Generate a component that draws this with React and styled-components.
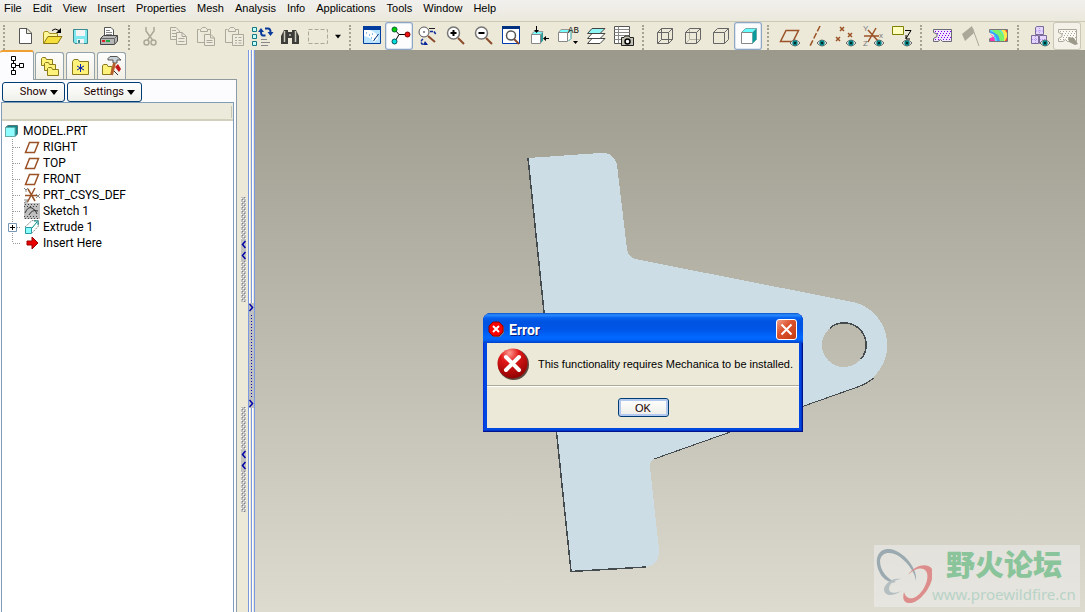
import React from "react";
import styled, { createGlobalStyle, css } from "styled-components";

const beige = "#ece9d8";
const uiFont = `"Liberation Sans", Arial, sans-serif`;
const treeFont = `Roboto, "Liberation Sans", sans-serif`;

const GlobalStyle = createGlobalStyle`
* { box-sizing: border-box; }
body {
  margin: 0;
  background: ${beige};
  font: 11px/16px ${uiFont};
  color: #000;
}
button { font: inherit; color: inherit; }
`;

const StyledApp = styled.div`
display: flex;
flex-direction: column;
min-height: 100vh;
overflow: hidden;
`;

const StyledMenuBar = styled.nav`
display: flex;
gap: 11px;
height: 22px;
padding: 0 4px;
background: linear-gradient(#f1f0ee, #ebe9dc);
border-bottom: 1px solid #cbc8b8;
`;

const StyledMenuItem = styled.button`
height: 16px;
padding: 0;
border: 0;
background: none;
white-space: nowrap;
`;

const StyledToolbar = styled.div`
display: flex;
align-items: stretch;
height: 28px;
background: ${beige};
`;

const StyledHandle = styled.span`
flex: none;
width: 3px;
margin: 3px 5px 0;
border-left: 2px dotted #a5a293;
&:first-child { margin-left: 3px; }
`;

const StyledTool = styled.button`
flex: none;
width: 28px;
height: 28px;
padding: 0;
border: 0;
background: none;
svg { display: block; }
${props => props.$active && css`
  border-radius: 3px;
  background: #fdfdfe;
  box-shadow: inset 0 0 0 1px #8ea6c4, inset 0 0 0 2px #dde5ee;
`}
${props => props.$dim && css`
  border-radius: 3px;
  background: #f3f1e8;
  box-shadow: inset 0 0 0 1px #cac7b8;
`}
`;

const StyledDropArrow = styled.button`
display: grid;
place-items: center;
flex: none;
width: 12px;
padding: 0;
border: 0;
background: none;
`;

const StyledMain = styled.div`
display: flex;
flex: 1;
`;

const StyledSide = styled.aside`
display: flex;
flex-direction: column;
flex: none;
width: 237px;
`;

const StyledTabs = styled.div`
display: flex;
align-items: flex-end;
gap: 2px;
height: 29px;
`;

const StyledTab = styled.button`
width: 29px;
height: 27px;
padding: 0;
border: 1px solid #93a2ab;
border-bottom: 0;
border-radius: 3px 3px 0 0;
background: linear-gradient(#fdfdfc, #f1efe5);
svg { display: block; margin: auto; }
${props => props.$active && css`
  position: relative;
  z-index: 1;
  width: 34px;
  height: 30px;
  margin: 0 -1px -1px 0;
  border-left: 0;
  border-top: 2px solid #f0a030;
  background: #fcfcfe;
`}
`;

const StyledPanel = styled.div`
display: flex;
flex-direction: column;
flex: 1;
padding: 2px 1px 0;
border-top: 1px solid #919b9c;
border-right: 1px solid #8c9baa;
background: #fcfcfe;
`;

const StyledPanelButtons = styled.div`
display: flex;
gap: 2px;
padding: 0 1px;
`;

const StyledPanelButton = styled.button`
display: flex;
align-items: center;
justify-content: flex-end;
gap: 3px;
width: ${props => props.$wide ? 75 : 63}px;
height: 20px;
padding: 0 6px 0 0;
border: 1px solid #003c74;
border-radius: 3px;
background: linear-gradient(#fff, #f0f0ea);
color: #200;
font-family: ${treeFont};
`;

const StyledTreeBox = styled.div`
flex: 1;
margin-right: 1px;
border: 1px solid #7f9db9;
border-bottom: 0;
background: #fff;
`;

const StyledTreeHeader = styled.div`
height: 18px;
padding: 3px 1px 0 0;
border-bottom: 2px solid #d2cfbd;
background: #ebeadb;
&::after {
  content: "";
  display: block;
  height: 12px;
  border-right: 1px solid #c7c5b2;
}
`;

const StyledTree = styled.ul`
margin: 0;
padding: 2px 0 0 3px;
list-style: none;
font: 12px/16px ${treeFont};
ul {
  padding: 0;
}
`;

const StyledNode = styled.div`
display: flex;
align-items: center;
height: 16px;
gap: ${props => props.$root ? 5 : 3}px;
white-space: nowrap;
svg { flex: none; }
`;

const StyledGrips = styled.div`
display: flex;
flex-direction: column;
align-items: flex-end;
gap: 105px;
flex: none;
width: 11px;
padding: 147px 2px 0 0;
`;

const StyledSash = styled.div`
flex: none;
width: 7px;
padding-top: 253px;
border-left: 1px solid #7b99e0;
border-right: 1px solid #7b99e0;
background: linear-gradient(90deg, #fff 1px, ${beige} 1px 2px, #7b99e0 2px 3px, #fff 3px 4px, ${beige} 4px);
svg { display: block; }
`;

const StyledViewport = styled.main`
position: relative;
flex: 1;
min-width: 0;
background: linear-gradient(#9b988c, #dddbcf);
`;

const StyledModel = styled.svg`
position: absolute;
inset: 0;
width: 100%;
height: 100%;
`;

const StyledDialog = styled.section`
position: absolute;
left: 228px;
top: 263px;
width: 320px;
padding: 0 4px 4px;
border-radius: 8px 8px 0 0;
background: #0046e0;
box-shadow: inset -1px -1px #00138c, inset 1px 0 #0831d9, inset -2px -2px #0036c8;
`;

const StyledTitleBar = styled.header`
display: flex;
align-items: center;
gap: 4px;
height: 30px;
margin: 0 -4px;
padding: 2px 6px 0 5px;
border-radius: 8px 8px 0 0;
background: linear-gradient(#0a52c8, #2a8cff 2px, #0560ee 5px, #0053e1 9px, #0056e8 17px, #0068ff 24px, #0062f8 27px, #0040c8);
h1 {
  flex: 1;
  margin: 0;
  padding-top: 2px;
  color: #fff;
  font: bold 14px/16px ${treeFont};
  text-shadow: 1px 1px #0a1f80;
}
`;

const StyledClose = styled.button`
display: grid;
place-items: center;
width: 21px;
height: 21px;
padding: 0;
border: 1px solid #fff;
border-radius: 3px;
background: linear-gradient(135deg, #f0a088, #dd5530 40%, #c33a10);
`;

const StyledMessage = styled.div`
display: flex;
align-items: center;
gap: 9px;
height: 43px;
padding: 0 10px;
border-bottom: 1px solid #aca899;
background: ${beige};
white-space: nowrap;
p { margin: 0; }
svg { flex: none; }
`;

const StyledFooter = styled.div`
display: flex;
justify-content: center;
padding: 11px 0;
border-top: 1px solid #fff;
background: ${beige};
`;

const StyledOk = styled.button`
width: 51px;
height: 19px;
padding: 0;
border: 1px solid #003c74;
border-radius: 3px;
background: linear-gradient(#fff, #eeede6);
box-shadow: inset 0 0 0 2px #b3c9f0;
color: #200;
line-height: 16px;
`;

const StyledWatermark = styled.div`
position: absolute;
right: 5px;
bottom: 5px;
display: flex;
width: 206px;
height: 62px;
background: rgba(240, 240, 240, 0.5);
svg { flex: none; }
`;

const StyledForum = styled.div`
display: flex;
flex-direction: column;
align-items: center;
margin-top: -3px;
white-space: nowrap;
strong {
  color: #8ac49a;
  font: 900 29px/42px "Noto Sans CJK SC", sans-serif;
}
span {
  color: #b8d3c7;
  font: 15px/20px "Noto Sans", sans-serif;
}
`;

function Eye({ x = 20, y = 21 }) {
  return (
    <g>
      <path d={`M${x - 5} ${y}q5 -6 10 0q-5 6 -10 0`} fill="#eee" stroke="#666" />
      <circle cx={x} cy={y} r="2.7" fill="#008080" />
      <rect x={x - 1} y={y - 1} width="2" height="2" fill="#002828" />
    </g>
  );
}

function Lens({ sign }) {
  return (
    <g>
      <path d="M17 16l6 6" stroke="#8b4a2b" strokeWidth="2" />
      <circle cx="12.5" cy="11" r="6" fill="#fff" stroke="#777" strokeWidth="1.5" />
      <path d={sign} stroke="#000" strokeWidth="2" fill="none" />
    </g>
  );
}

function MeshRegion({ fill, dots, edge }) {
  return (
    <g>
      <path d="M5.500 7.500H23.500V19.500H14.500L12.500 17.500L10 19.500H5.500V16.500L9 14.500V12L5.500 10.500z" fill={fill} stroke={edge} />
      <path d="M7 9.500h16M9 11.500h14M11 13.500h12M10 15.500h13M7 17.500h4M15 17.500h8" stroke={dots} strokeDasharray="1 2" />
    </g>
  );
}

const clipboard = (
  <path d="M7.500 7.500H5.500V20.500H12M15 7.500H18.500V12M8.500 9.500V7.500L10.500 5.500H13.500L15.500 7.500V9.500z" />
);

const icons = {
  New: <path d="M8.500 6.500H16L20.500 11V21.500H8.500zM15.500 6.500V11.500H20.500" fill="#fff" stroke="#555" />,
  Open: (
    <g>
      <path d="M4.500 21V10.500L6 9.500H9L10.500 11.500H18.500V14" fill="#fff79a" stroke="#a58f20" />
      <path d="M4.500 21.500L9 14.500H23L18.500 21.500z" fill="#f5df3d" stroke="#8a7714" />
      <path d="M13 8.500q3 -3 7 0" fill="none" stroke="#000" />
      <path d="M17 11h5V6z" fill="#000" />
    </g>
  ),
  Save: (
    <g>
      <path d="M6.500 7.500H20.500V21.500H8L6.500 20z" fill="#7ee8ee" stroke="#3a8a90" />
      <path d="M9 8h9v6H9zM10 17h7v4.500h-7z" fill="#f4f4f4" />
      <path d="M11 18h2v3h-2z" fill="#3a8a90" />
    </g>
  ),
  Print: (
    <g>
      <path d="M9.500 13V5.500H16L18.500 8V13" fill="#fff" stroke="#555" />
      <path d="M11 8.500h4M11 10.500h6M11 12.500h6" stroke="#888" />
      <path d="M5.500 16.500L8.500 13.500H22.500V19L19.500 22.500H5.500z" fill="#b5b5b5" stroke="#444" />
      <path d="M6 16.500H19.500V22M19.500 16.500L22 14" fill="none" stroke="#666" />
      <path d="M7 18h3v2H7z" fill="#d22" />
      <path d="M11 18h4v2h-4z" fill="#2a4" />
    </g>
  ),
  Cut: (
    <g fill="none" stroke="#aca899" strokeWidth="1.500">
      <path d="M10 5V9L16.500 18M18 5V9L11.500 18" />
      <circle cx="10.500" cy="20.500" r="2.500" />
      <circle cx="17.500" cy="20.500" r="2.500" />
    </g>
  ),
  Copy: (
    <g fill="#eeecdf" stroke="#aca899">
      <path d="M6.500 5.500H12L15.500 9V17.500H6.500zM8 8.500h4M8 11.500h6M8 14.500h6" />
      <path d="M12.500 10.500H18L22.500 14.500V22.500H12.500zM18 10.500V14.500H22M14.500 16.500h6M14.500 19.500h6" />
    </g>
  ),
  Paste: (
    <g fill="#eeecdf" stroke="#aca899">
      {clipboard}
      <path d="M12.500 12.500H19L22.500 16V23.500H12.500zM18.500 12.500V16H22M14.500 18.500h6M14.500 20.500h6" />
    </g>
  ),
  "Paste Special": (
    <g fill="#eeecdf" stroke="#aca899">
      {clipboard}
      <path d="M12.500 12.500H23.500V23.500H12.500zM15 15.500h2M18.500 15.500h3M15 18.500h2M18.500 18.500h3M15 21h2M18.500 21h3" />
    </g>
  ),
  Regenerate: (
    <g fill="none">
      <path d="M4.500 5.500h4v4h-4zM4.500 12.500h4v4h-4zM4.500 19.500h4v4h-4z" fill="#c5ffff" stroke="#157a80" />
      <path d="M13 17.500h6M13 20.500h9M13 23.500h7" stroke="#888" />
      <path d="M17.500 13.500H15q-2 0 -2 -4M17 6.500h3q2.500 0 2.500 4" stroke="#0a3a9c" strokeWidth="2" />
      <path d="M10 10h6l-3 -4zM19.500 10h6l-3 4z" fill="#0a3a9c" />
    </g>
  ),
  Find: (
    <g>
      <path d="M5 21V14L8 8H12V22H5zM16 22V8H20L23 14V22zM12 10h4v6h-4z" fill="#3c3c38" />
      <path d="M8.500 9V20M19.500 9V20" stroke="#c9c9bd" strokeWidth="1.500" />
      <path d="M13 12h2v2h-2z" fill="#999" />
    </g>
  ),
  Select: <path d="M4.500 7.500H23.500V21.500H4.500z" fill="none" stroke="#aca899" strokeDasharray="4 2" />,
  Repaint: (
    <g>
      <path d="M6.500 4.500H23.500V21.500H6.500z" fill="#b8e4ff" stroke="#003c9e" />
      <path d="M6 4h18v4H6z" fill="#003c9e" />
      <path d="M7 8h6q8 3 8 9l-4 3q-4 -5 -10 -6z" fill="#fff" />
      <path d="M9 11h1M12 13h1M15 12h1M14 16h1M17 17h1" stroke="#1b7fd8" />
      <path d="M21.500 12l-5 7" stroke="#003080" />
    </g>
  ),
  "Spin Center": (
    <g>
      <path d="M10 8l4 4.500h8M14 12.500l-4 7" fill="none" stroke="#000" />
      <circle cx="9.500" cy="7.500" r="2.500" fill="#0c0" stroke="#063" />
      <circle cx="22.500" cy="12.500" r="2.500" fill="#f01010" stroke="#700" />
      <circle cx="9.500" cy="19.500" r="2.500" fill="#0dd" stroke="#055" />
    </g>
  ),
  Orient: (
    <g fill="none">
      <path d="M15 14l7 6" stroke="#8b4a2b" strokeWidth="2" />
      <circle cx="11" cy="10" r="5" fill="#fff" stroke="#555" />
      <path d="M11 9v2M16 6.500h6" stroke="#222" />
      <path d="M17 9.500h4l2 3M10 17q-3 2 -1 5h5" stroke="#0a2a9c" strokeWidth="1.500" strokeDasharray="3 1" />
      <path d="M12 19l3 4h-5z" fill="#0a2a9c" />
    </g>
  ),
  "Zoom In": <Lens sign="M9.500 11h6M12.500 8v6" />,
  "Zoom Out": <Lens sign="M9.500 11h6" />,
  Refit: (
    <g>
      <path d="M5.500 4.500H22.500V21.500H5.500z" fill="#fff" stroke="#003cae" />
      <path d="M5 4h18v3H5z" fill="#003080" />
      <path d="M17 17l5 5" stroke="#8b4a2b" strokeWidth="2" />
      <circle cx="14" cy="13.500" r="4.500" fill="#fff" stroke="#555" strokeWidth="1.500" />
    </g>
  ),
  Reorient: (
    <g>
      <path d="M6.500 12.500L9 9.500H18L15.500 12.500z" fill="#7ff" stroke="#999" />
      <path d="M6.500 12.500H15.500V21.500H6.500z" fill="#fff" stroke="#888" />
      <path d="M16 12.500L18 10V18.500L16 21z" fill="#2a9c9c" />
      <path d="M11.500 4v5M24 16.500h-5" stroke="#000" />
      <path d="M9 8h5l-2.500 3zM21 14v5l-3 -2.500z" fill="#000" />
    </g>
  ),
  "Saved Views": (
    <g>
      <path d="M5.500 10.500L8 7.500H17L14.500 10.500z" fill="#7ff" stroke="#999" />
      <path d="M5.500 10.500H14.500V19.500H5.500z" fill="#fff" stroke="#888" />
      <path d="M15.500 10.500L18 8V16.500L15.500 19" fill="#fff" stroke="#2a9c9c" />
      <text x="15" y="11" fontSize="9" fontFamily="Liberation Mono, monospace" fill="#111">AB</text>
      <path d="M20 19h5l-2.500 3z" fill="#000" />
    </g>
  ),
  Layers: (
    <g stroke="#444">
      <path d="M6.500 21.500L11 16.500H24L19 21.500z" fill="#fff" />
      <path d="M6.500 16.500L11 11.500H24L19 16.500z" fill="#fff" />
      <path d="M6.500 11.500L11 6.500H24L19 11.500z" fill="#8ff6f6" />
    </g>
  ),
  "View Manager": (
    <g>
      <path d="M5.500 4.500H20.500V21.500H5.500z" fill="#fff" stroke="#555" />
      <path d="M5.500 7.500h15M5.500 10.500h15M5.500 13.500h15M5.500 17.500h15M9.500 4.500v17" stroke="#888" />
      <path d="M12.500 15.500H15L16 14H20L21 15.500H24.500V23.500H12.500z" fill="#c4c2b5" stroke="#222" />
      <circle cx="18.500" cy="19.500" r="2.500" fill="#fff" stroke="#000" strokeWidth="1.500" />
    </g>
  ),
  Wireframe: <path d="M7.500 10.500H18.500V21.500H7.500zM11.500 6.500H22.500V17.500H11.500zM7.500 10.500l4 -4M18.500 10.500l4 -4M18.500 21.500l4 -4M7.500 21.500l4 -4" fill="none" stroke="#666" />,
  "Hidden Line": (
    <g fill="none">
      <path d="M11.500 7V17.500H22M11.500 17.500l-4 4" stroke="#b5b2a4" />
      <path d="M7.500 10.500H18.500V21.500H7.500zM7.500 10.500l4 -4H22.500V17.500l-4 4M18.500 10.500l4 -4" stroke="#666" />
    </g>
  ),
  "No Hidden": <path d="M7.500 10.500H18.500V21.500H7.500zM7.500 10.500l4 -4H22.500V17.500l-4 4M18.500 10.500l4 -4" fill="none" stroke="#666" />,
  Shading: (
    <g>
      <path d="M7.500 10.500l4 -4H22.500l-4 4z" fill="#6ff" stroke="#7aa" />
      <path d="M7.500 10.500H18.500V21.500H7.500z" fill="#fff" stroke="#888" />
      <path d="M18.500 10.500l4 -4V17.500l-4 4z" fill="#0a9c9c" stroke="#6aa" />
    </g>
  ),
  "Datum Planes": <g><path d="M5.500 19.500L11 8.500H23.500L18 19.500z" fill="none" stroke="#9a5226" strokeWidth="1.500" /><Eye /></g>,
  "Datum Axes": <g><path d="M17 4L7 24" stroke="#9a5226" strokeWidth="1.500" strokeDasharray="6 2" /><Eye x={19} /></g>,
  "Datum Points": (
    <g>
      <path d="M9 5l4 4M13 5l-4 4M17 11l4 4M21 11l-4 4M5 15l4 4M9 15l-4 4" stroke="#9a5226" strokeWidth="1.500" />
      <Eye />
    </g>
  ),
  "Coordinate Systems": (
    <g>
      <path d="M5 14h15M9 20L17 6M9 8l10 11" stroke="#9a5226" strokeWidth="1.500" />
      <g fontSize="8" fontFamily="Liberation Sans, sans-serif" fill="#777">
        <text x="4" y="9">Y</text>
        <text x="20" y="16">x</text>
        <text x="4" y="24">Z</text>
      </g>
      <Eye />
    </g>
  ),
  Annotations: (
    <g>
      <path d="M5.500 4.500H16.500V12.500H5.500z" fill="#ffffc0" stroke="#808000" />
      <path d="M18 8.500h6l-5 8M19 13v4h4" fill="none" stroke="#000" />
      <Eye />
    </g>
  ),
  "Mesh Region": <MeshRegion fill="#f3e6ff" dots="#7a00f0" edge="#6a6a76" />,
  Flag: <g><path d="M6 12L16 4L18 11L9 19z" fill="#aca899" /><path d="M16.500 6L23 24" stroke="#aca899" /></g>,
  Results: (
    <g>
      <path d="M5.500 7.500H23.500V19.500H12L10 17V12L5.500 10.500z" fill="#4fe0ff" />
      <path d="M8 8h7q6 4 5 11h-5q0 -6 -4 -7z" fill="#7cf36a" />
      <path d="M17 8h6v11h-3q1 -7 -3 -11z" fill="#ffe94a" />
      <path d="M6 11q6 1 7 8h3q-1 -8 -10 -10z" fill="#3aa0ff" />
      <path d="M6 12q5 2 5 7H6v-3l3 -1z" fill="#f038b8" />
      <path d="M21 8h2v3zM21 19l2 -4v4z" fill="#f04040" />
      <path d="M5.500 10.500V7.500H23.500V19.500H5.500V16.500" fill="none" stroke="#777" />
    </g>
  ),
  Simulation: (
    <g>
      <path d="M10.500 5.500L12 4.500H18.500V12.500H10.500zM6.500 13.500H13.500V21.500H6.500zM14.500 13.500H21.500V21.500H14.500z" fill="#e4d6ff" stroke="#7a6a9c" />
      <path d="M11 9h7M14.500 6v6M7 17.500h6M10.500 14v7M15 17.500h6" stroke="#b79af0" strokeDasharray="1 1" />
      <Eye />
    </g>
  ),
  "Mesh Control": (
    <g>
      <MeshRegion fill="#faf9f4" dots="#aca899" edge="#aca899" />
      <path d="M15 15l6 1l4 6l-3 1l-6 -3z" fill="#9c998b" />
    </g>
  ),
};

const menus = ["File", "Edit", "View", "Insert", "Properties", "Mesh", "Analysis", "Info", "Applications", "Tools", "Window", "Help"];

const groups = [
  ["New", "Open", "Save", "Print"],
  ["Cut", "Copy", "Paste", "Paste Special", "Regenerate", "Find", "Select"],
  ["Repaint", "Spin Center", "Orient", "Zoom In", "Zoom Out", "Refit", "Reorient", "Saved Views", "Layers", "View Manager"],
  ["Wireframe", "Hidden Line", "No Hidden", "Shading"],
  ["Datum Planes", "Datum Axes", "Datum Points", "Coordinate Systems", "Annotations"],
  ["Mesh Region", "Flag", "Results"],
  ["Simulation", "Mesh Control"],
];

const active = ["Spin Center", "Shading"];

function Caret({ width = 8 }) {
  return (
    <svg width={width} height="5" viewBox="0 0 8 5" aria-hidden="true">
      <path d="M0 0h8L4 5z" />
    </svg>
  );
}

function Toolbar() {
  return (
    <StyledToolbar role="toolbar">
      {groups.map((group, i) => (
        <React.Fragment key={i}>
          <StyledHandle />
          {group.map(name => (
            <StyledTool key={name} aria-label={name} $active={active.includes(name)} $dim={name === "Mesh Control"}>
              <svg width="28" height="28" viewBox="0 0 28 28">{icons[name]}</svg>
            </StyledTool>
          ))}
          {i === 1 && <StyledDropArrow aria-label="Selection options"><Caret width={6} /></StyledDropArrow>}
        </React.Fragment>
      ))}
    </StyledToolbar>
  );
}

function folder(x, y) {
  return <path d={`M${x} ${y + 8}v-7l1 -1h3l1 2h6v6z`} fill="#fff27a" stroke="#8a7a1e" />;
}

const tabs = [
  ["Model Tree", <path d="M6.500 2.500h4v4h-4zM6.500 9.500h4v4h-4zM14.500 9.500h4v4h-4zM6.500 16.500h4v4h-4zM8.500 6.500v3M8.500 13.500v3M10.500 11.500h4" fill="#fff" stroke="#000" />],
  ["Folder Browser", <g>{folder(3.5, 3.5)}{folder(6.5, 8.5)}{folder(9.5, 13.5)}</g>],
  ["Favorites", (
    <g>
      <path d="M3.500 20.500V7.500L5 5.500H9L10.500 7.500H19.500V20.500z" fill="#fff27a" stroke="#8a7a1e" />
      <path d="M11.500 10v8M8 12l7 4M15 12l-7 4" stroke="#0020b0" />
    </g>
  )],
  ["Connections", (
    <g>
      <path d="M2.500 20.500V11.500L4 10.500H7L8 12.500H12V20.500z" fill="#fff27a" stroke="#8a7a1e" />
      <path d="M8 4.500L10 2.500H17L21 6H17V9H13V6H8z" fill="#c9d2d6" stroke="#555" />
      <path d="M14.500 9L11.500 21" stroke="#b5602a" strokeWidth="3" />
      <path d="M18 10l3 5l-2 3l-4 -5z" fill="#c01818" />
      <path d="M14 17l4 4" stroke="#333" />
    </g>
  )],
];

const plane = <path d="M1.500 13.500L5.500 3.500H14.500L10.500 13.500z" fill="none" stroke="#9a5226" strokeWidth="1.500" />;

const nodes = [
  ["RIGHT", plane],
  ["TOP", plane],
  ["FRONT", plane],
  ["PRT_CSYS_DEF", <g><path d="M1 8.500h12M3.500 15L11 1M4 2l7 12" stroke="#9a5226" strokeWidth="1.500" /><path d="M0 1l2 2l2 -2M2 3v2M12 7l4 4M16 7l-4 4M0 13h4l-4 3h4" fill="none" stroke="#888" /></g>],
  ["Sketch 1", (
    <g>
      <path d="M0 0h16v16H0z" fill="#bfbfbf" />
      <path d="M1 1.500h15M0 3.500h15M0 13.500h15M1 15.500h15" stroke="#444" strokeDasharray="1 2" />
      <path d="M1 10q3 -7 7 -5t5 6M5 12q3 -6 9 -4" fill="none" stroke="#333" />
    </g>
  )],
  ["Extrude 1", (
    <g>
      <path d="M1.500 8.500h6v6h-6z" fill="#8ff" stroke="#2a9aa0" />
      <path d="M1 8L8 1.500H14.500V7L8 14" fill="none" stroke="#888" strokeDasharray="2 1" />
      <path d="M8 9l5 -6M10 2h4v4" fill="none" stroke="#088" />
    </g>
  ), true],
  ["Insert Here", <path d="M3 6h5V2l6 6l-6 6v-4H3z" fill="#e80000" stroke="#900" strokeWidth="1" />],
];

function Branch({ expandable, last }) {
  return (
    <svg width="16" height="16" aria-hidden="true">
      <path d={last ? "M7.500 0v8M8 8.500h8" : "M7.500 0v16M8 8.500h8"} fill="none" stroke="#999" strokeDasharray="1 1" />
      {expandable && <path d="M3.500 4.500h8v8h-8z" fill="#fff" stroke="#7898b5" />}
      {expandable && <path d="M5 8.500h5M7.500 6v5" stroke="#000" />}
    </svg>
  );
}

function Side() {
  return (
    <StyledSide>
      <StyledTabs role="tablist">
        {tabs.map(([name, art], i) => (
          <StyledTab key={name} role="tab" aria-label={name} aria-selected={i === 0} $active={i === 0}>
            <svg width="24" height="24" viewBox="0 0 24 24">{art}</svg>
          </StyledTab>
        ))}
      </StyledTabs>
      <StyledPanel>
        <StyledPanelButtons>
          <StyledPanelButton>Show<Caret /></StyledPanelButton>
          <StyledPanelButton $wide>Settings<Caret /></StyledPanelButton>
        </StyledPanelButtons>
        <StyledTreeBox>
          <StyledTreeHeader />
          <StyledTree>
            <li>
              <StyledNode $root>
                <svg width="13" height="14">
                  <path d="M0.500 3.500L3 1.500H12.500V10L10 12.500H0.500z" fill="#0a8a8a" stroke="#577" />
                  <path d="M0.500 3.500h9.500v9h-9.500z" fill="#8ffcff" stroke="#6aa" />
                </svg>
                MODEL.PRT
              </StyledNode>
              <StyledTree>
                {nodes.map(([name, art, expandable], i) => (
                  <li key={name}>
                    <StyledNode>
                      <Branch expandable={expandable} last={i === nodes.length - 1} />
                      <svg width="16" height="16" viewBox="0 0 16 16">{art}</svg>
                      {name}
                    </StyledNode>
                  </li>
                ))}
              </StyledTree>
            </li>
          </StyledTree>
        </StyledTreeBox>
      </StyledPanel>
    </StyledSide>
  );
}

function Grip({ id }) {
  return (
    <svg width="5" height="105">
      <pattern id={id} width="4" height="4" patternUnits="userSpaceOnUse">
        <path d="M0 0h4v4H0z" fill="#c0c0c0" />
        <path d="M0 1h1v1H0zM2 3h1v1H2z" fill="#fff" />
        <path d="M1 2h1v1H1zM3 0h1v1H3z" fill="#808080" />
      </pattern>
      <path d="M0 0h5v105H0z" fill={`url(#${id})`} />
      <path d="M0 42h5v22H0z" fill="#c0c0c0" />
      <path d="M4.500 44l-3 3.500l3 3.500M4.500 55l-3 3.500l3 3.500" fill="none" stroke="#0000a8" strokeWidth="1.500" />
    </svg>
  );
}

function Model() {
  return (
    <StyledModel viewBox="255 50 830 562" preserveAspectRatio="xMinYMin slice" shapeRendering="crispEdges">
      <path
        d="M528 158L600 153Q614 152 617 165L627 249Q628 257 635 259L853 302A44 44 0 0 1 859 386L656 458Q650 460 650 467L659 550Q659 566 645 567L571 572z
        M866 345a22 22 0 1 0 -44 0a22 22 0 1 0 44 0z"
        fill="#ccdde6"
        fillRule="evenodd"
      />
      <path d="M528 158L571 571.500L646 567" fill="none" stroke="#444b4e" strokeWidth="1.500" />
      <path d="M654 459L859 386.500Q868 383 874 378" fill="none" stroke="#444b4e" />
      <path d="M830 328A22 22 0 0 1 861 359" fill="none" stroke="#444b4e" strokeWidth="1.500" />
    </StyledModel>
  );
}

function ErrorDialog() {
  return (
    <StyledDialog role="alertdialog" aria-labelledby="title" aria-describedby="message">
      <StyledTitleBar>
        <svg width="17" height="17" aria-hidden="true">
          <path d="M6 2h6l4 4v6l-4 4H6l-4 -4V6z" fill="#777" />
          <path d="M5 1h6l4 4v6l-4 4H5l-4 -4V5z" fill="#f00" stroke="#800" />
          <path d="M5 5l6 6M11 5l-6 6" stroke="#fff" strokeWidth="2" />
        </svg>
        <h1 id="title">Error</h1>
        <StyledClose aria-label="Close">
          <svg width="13" height="13"><path d="M1.500 1.500l10 10M11.500 1.500l-10 10" stroke="#fff" strokeWidth="2" /></svg>
        </StyledClose>
      </StyledTitleBar>
      <StyledMessage>
        <svg width="32" height="32" viewBox="0 0 32 32" aria-hidden="true">
          <defs>
            <radialGradient id="ball" cx="0.4" cy="0.15" r="0.9">
              <stop offset="0" stopColor="#ff9a90" />
              <stop offset="0.35" stopColor="#e01818" />
              <stop offset="1" stopColor="#8a0000" />
            </radialGradient>
          </defs>
          <circle cx="16.500" cy="16.500" r="15.500" fill="#5b4a40" />
          <circle cx="15.500" cy="15.500" r="15" fill="url(#ball)" />
          <path d="M9 9l13 13M22 9L9 22" stroke="#fff" strokeWidth="4" strokeLinecap="round" />
        </svg>
        <p id="message">This functionality requires Mechanica to be installed.</p>
      </StyledMessage>
      <StyledFooter><StyledOk>OK</StyledOk></StyledFooter>
    </StyledDialog>
  );
}

function Watermark() {
  return (
    <StyledWatermark>
      <svg width="58" height="62" viewBox="0 0 58 62" aria-hidden="true">
        <path d="M42 36C44 24 30 6 16 4C4 3 0 14 5 26C8 34 16 39 22 37C14 35 6 26 6 16C7 6 18 6 26 12C35 19 41 28 42 36z" fill="#9baab0" />
        <path d="M34 30C42 19 54 18 58 24C62 38 46 58 36 58C30 58 28 54 30 47C32 54 38 55 43 51C51 45 56 32 52 26C48 21 40 24 34 30z" fill="#dd8e8c" />
        <path d="M27 34C18 32 10 39 10 45C11 52 20 51 27 46C20 49 15 48 15 44C15 39 20 35 27 34z" fill="#b5bfc2" />
      </svg>
      <StyledForum>
        <strong lang="zh-CN">野火论坛</strong>
        <span>www.proewildfire.cn</span>
      </StyledForum>
    </StyledWatermark>
  );
}

function App() {
  return (
    <StyledApp>
      <GlobalStyle />
      <StyledMenuBar>
        {menus.map(name => <StyledMenuItem key={name}>{name}</StyledMenuItem>)}
      </StyledMenuBar>
      <Toolbar />
      <StyledMain>
        <Side />
        <StyledGrips>
          <Grip id="upper" />
          <Grip id="lower" />
        </StyledGrips>
        <StyledSash>
          <svg width="5" height="105">
            <path d="M0 0h5v105H0z" fill="#c0c0c0" />
            <path d="M2.500 12v82" stroke="#0000a8" strokeDasharray="1 2" />
            <path d="M0.500 1l3 3.500l-3 3.500M0.500 97l3 3.500l-3 3.500" fill="none" stroke="#0000a8" strokeWidth="1.500" />
          </svg>
        </StyledSash>
        <StyledViewport>
          <Model />
          <ErrorDialog />
          <Watermark />
        </StyledViewport>
      </StyledMain>
    </StyledApp>
  );
}

export default App;
